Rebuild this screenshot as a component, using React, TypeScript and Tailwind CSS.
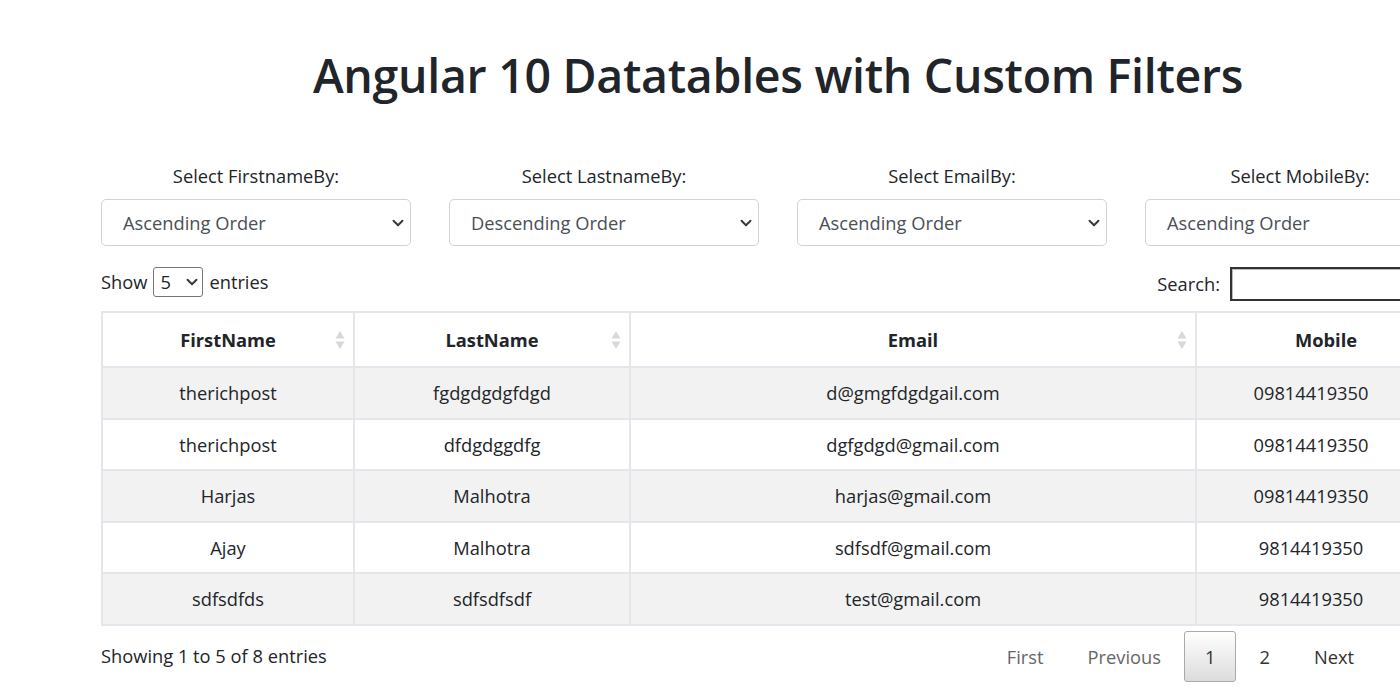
import React from "react";

const rows = [
  ["therichpost", "fgdgdgdgfdgd", "d@gmgfdgdgail.com", "09814419350"],
  ["therichpost", "dfdgdggdfg", "dgfgdgd@gmail.com", "09814419350"],
  ["Harjas", "Malhotra", "harjas@gmail.com", "09814419350"],
  ["Ajay", "Malhotra", "sdfsdf@gmail.com", "9814419350"],
  ["sdfsdfds", "sdfsdfsdf", "test@gmail.com", "9814419350"],
];

const filters = [
  ["Select FirstnameBy:", "Ascending Order"],
  ["Select LastnameBy:", "Descending Order"],
  ["Select EmailBy:", "Ascending Order"],
  ["Select MobileBy:", "Ascending Order"],
];

function Chevron({ className }: { className?: string }) {
  return (
    <svg viewBox="0 0 16 16" className={className} fill="none">
      <path d="M2 5l6 6 6-6" stroke="#343a40" strokeWidth="2.6" strokeLinecap="round" strokeLinejoin="round" />
    </svg>
  );
}

function SortBoth() {
  return (
    <svg viewBox="0 0 10 20" className="absolute right-[8px] top-1/2 h-[20px] w-[10px] -translate-y-1/2">
      <path d="M5 1L9.5 8.5H0.5z" fill="#d8d8d8" />
      <path d="M5 19L9.5 11.5H0.5z" fill="#d8d8d8" />
    </svg>
  );
}

export default function App() {
  return (
    <div className="h-[700px] w-[1400px] overflow-hidden bg-white text-[18.3px] text-[#212529] [font-family:'Open_Sans','Noto_Sans',sans-serif]">
      <div className="ml-[82px] w-[1392px]">
        <h1 className="pt-[45px] text-center text-[46.5px] font-semibold leading-[60px] tracking-[-0.3px]">
          Angular 10 Datatables with Custom Filters
        </h1>

        <div className="mt-[56px] grid grid-cols-4">
          {filters.map(([label, value]) => (
            <div key={label} className="px-[19px] text-center">
              <div className="leading-[30px]">{label}</div>
              <div className="mt-[8px] flex h-[47px] items-center justify-between rounded-[5px] border border-[#ced4da] bg-white pl-[21px] pr-[6px] text-[#495057]">
                <span>{value}</span>
                <Chevron className="h-[12px] w-[12px]" />
              </div>
            </div>
          ))}
        </div>

        <div className="mt-[17px] flex items-center justify-between px-[19px]">
          <div className="flex items-center leading-[30px]">
            <span>Show</span>
            <span className="mx-[6px] flex h-[30px] w-[50px] items-center justify-between rounded-[3px] border border-[#767676] pl-[6px] pr-[4px]">
              <span>5</span>
              <Chevron className="h-[12px] w-[12px]" />
            </span>
            <span>entries</span>
          </div>
          <div className="mt-[4px] flex items-center">
            <span>Search:</span>
            <span className="ml-[10px] h-[34px] w-[225px] border-2 border-[#333] shadow-[inset_1px_1px_0_#bbb]" />
          </div>
        </div>

        <div className="mt-[10px] px-[19px]">
          <table className="w-[1354px] table-fixed border-collapse">
            <colgroup>
              <col className="w-[252px]" />
              <col className="w-[276px]" />
              <col className="w-[566px]" />
              <col className="w-[260px]" />
            </colgroup>
            <thead>
              <tr className="h-[55px] border-b border-b-[#111]">
                {["FirstName", "LastName", "Email"].map((h) => (
                  <th key={h} className="relative border-2 border-b-0 border-[#e3e6ea] px-[18px] text-center font-bold">
                    {h}
                    <SortBoth />
                  </th>
                ))}
                <th className="border-2 border-b-0 border-[#e3e6ea] px-[18px] text-center font-bold">Mobile</th>
              </tr>
            </thead>
            <tbody className="border-b border-b-[#111]">
              {rows.map((r, i) => (
                <tr key={i} className={i % 2 === 0 ? "h-[51.6px] bg-[#f2f2f2]" : "h-[51.6px] bg-white"}>
                  {r.map((c, j) => (
                    <td
                      key={j}
                      className={
                        j === 3
                          ? "border-2 border-[#e3e6ea] pr-[30px] text-center"
                          : "border-2 border-[#e3e6ea] px-[10px] text-center"
                      }
                    >
                      {c}
                    </td>
                  ))}
                </tr>
              ))}
            </tbody>
          </table>

          <div className="flex items-center justify-between pt-[5px]">
            <div className="leading-[30px]">Showing 1 to 5 of 8 entries</div>
            <div className="flex items-center text-[#333]">
              <span className="ml-[2px] flex h-[51px] items-center border border-transparent px-[20px] text-[#666]">First</span>
              <span className="ml-[2px] flex h-[51px] items-center border border-transparent px-[20px] text-[#666]">Previous</span>
              <span className="ml-[2px] flex h-[51px] items-center rounded-[3px] border border-[#aaa] bg-gradient-to-b from-white to-[#dcdcdc] px-[20px]">1</span>
              <span className="ml-[2px] flex h-[51px] items-center border border-transparent px-[20px]">2</span>
              <span className="ml-[2px] flex h-[51px] items-center border border-transparent px-[20px]">Next</span>
              <span className="ml-[2px] h-[51px] w-[78px]" />
            </div>
          </div>
        </div>
      </div>
    </div>
  );
}
